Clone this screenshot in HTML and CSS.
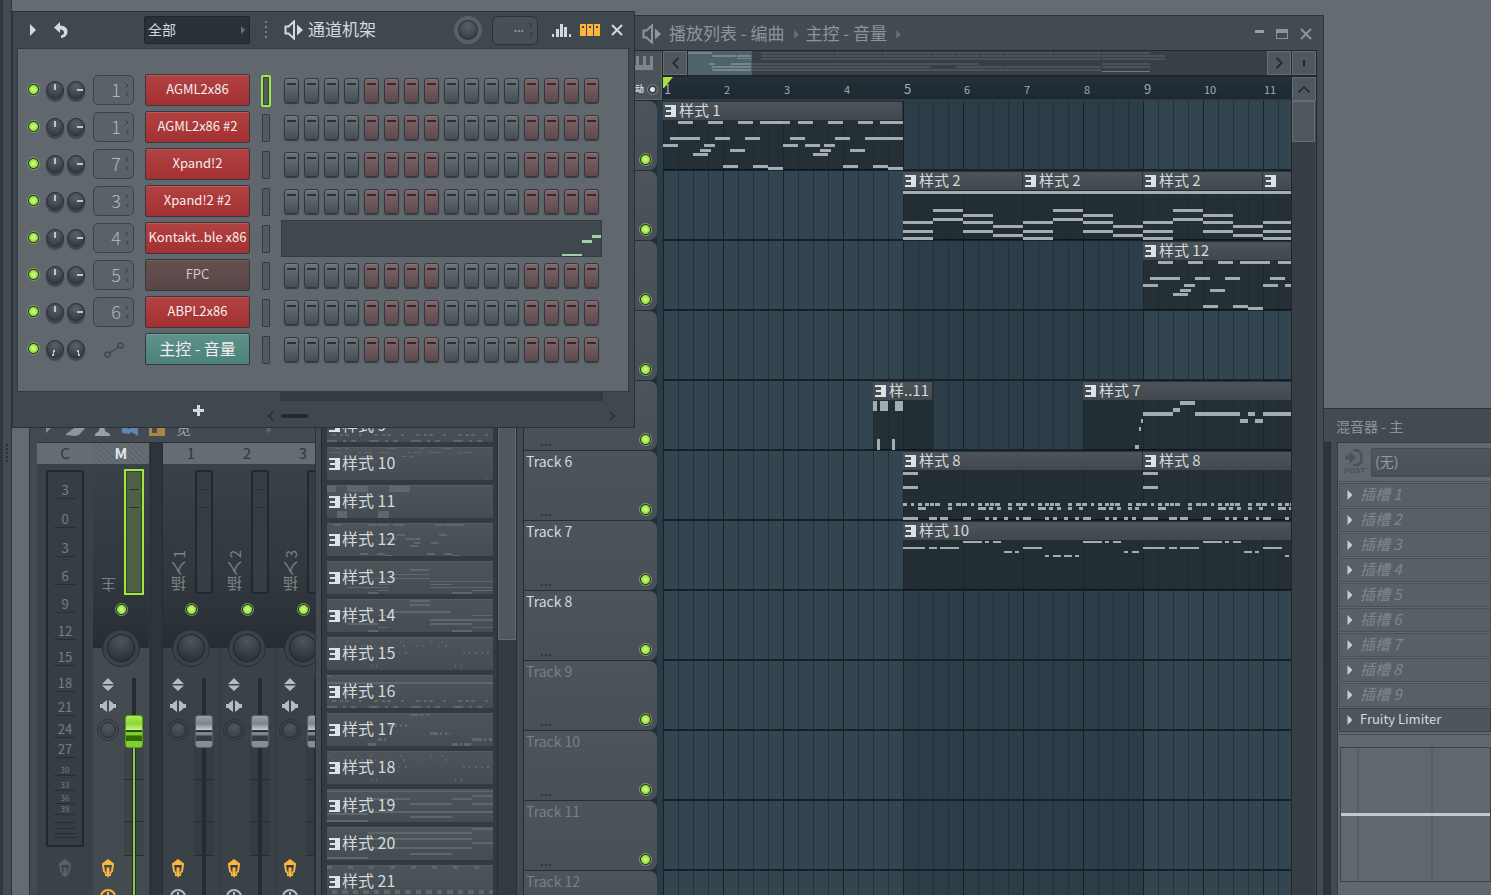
FILE: index.html
```html
<!DOCTYPE html>
<html lang="zh-CN">
<head>
<meta charset="utf-8">
<title>通道机架</title>
<link rel="stylesheet" href="styles.css">
</head>
<body>
<svg class="defs" aria-hidden="true">
  <symbol id="i-right" viewBox="0 0 6 12"><path d="M0 0L6 6L0 12Z"/></symbol>
  <symbol id="i-undo" viewBox="0 0 14 16"><path d="M6 0L0 5.500L6 11V7.500C9 7.500 10 9 10 10.500C10 12 9 13 7 13.500V16C11 15.500 13.500 13 13.500 9.500C13.500 6 10.500 3.800 6 3.600Z"/></symbol>
  <symbol id="i-speaker" viewBox="0 0 19 20"><path d="M1.500 6.500H4.500L10 1.500V18.500L4.500 13.500H1.500Z" fill="none" stroke="currentColor" stroke-width="2"/><path d="M13 4.500L19 10L13 15.500Z"/></symbol>
  <symbol id="i-bars" viewBox="0 0 19 13"><path d="M0 10h2v3H0zM4 5h3v8H4zM8 0h3v13H8zM12 3h3v10h-3zM17 10h2v3h-2z"/></symbol>
  <symbol id="i-steps" viewBox="0 0 20 12"><path fill-rule="evenodd" d="M0 0h6v12H0zM7 0h6v12H7zM14 0h6v12h-6zM2 2v2h2V2zM9 2v2h2V2zM16 2v2h2V2z"/></symbol>
  <symbol id="i-x" viewBox="0 0 12 12"><path d="M1 1L11 11M11 1L1 11" fill="none" stroke="currentColor" stroke-width="2"/></symbol>
  <symbol id="i-max" viewBox="0 0 12 10"><path fill-rule="evenodd" d="M0 0h12v10H0zM1 4v5h10V4z"/></symbol>
  <symbol id="i-plus" viewBox="0 0 11 11"><path d="M4 0h3v4h4v3H7v4H4V7H0V4h4z"/></symbol>
  <symbol id="i-lt" viewBox="0 0 6 10"><path d="M5.500 .5L1 5L5.500 9.500" fill="none" stroke="currentColor" stroke-width="1.500"/></symbol>
  <symbol id="i-gt" viewBox="0 0 6 10"><path d="M.5 .5L5 5L.5 9.500" fill="none" stroke="currentColor" stroke-width="1.500"/></symbol>
  <symbol id="i-up" viewBox="0 0 12 7"><path d="M.5 6.500L6 1L11.500 6.500" fill="none" stroke="currentColor" stroke-width="1.500"/></symbol>
  <symbol id="i-spin" viewBox="0 0 4 14"><path d="M.5 0.500L3 2.500L.5 4.500M3.500 9.500L1 11.500L3.500 13.500" fill="none" stroke="currentColor"/></symbol>
  <symbol id="i-auto" viewBox="0 0 20 16"><g fill="none" stroke="currentColor" stroke-width="1.500"><circle cx="3.500" cy="12.500" r="2.500"/><circle cx="16.500" cy="3.500" r="2.500"/><path d="M5.500 11L14.500 5"/></g></symbol>
  <symbol id="i-pat" viewBox="0 0 11 12"><path d="M0 0h11v12H0v-2h6V7H1V5h5V2H0z"/></symbol>
  <symbol id="i-piano" viewBox="0 0 26 14"><path d="M0 0h5v9h4V0h3v9h4V0h3v9h4V0h3v14H0z"/></symbol>
  <symbol id="i-updown" viewBox="0 0 12 13"><path d="M6 0L12 6H0zM0 7.500h12L6 13z"/></symbol>
  <symbol id="i-swap" viewBox="0 0 16 12"><path d="M7 0v12L3 9V8H0V4h3V3zM9 0v12l4-3V8h3V4h-3V3z"/></symbol>
  <symbol id="i-arm" viewBox="0 0 14 19"><path d="M7 0L13 4.500V6H1V4.500z"/><path d="M2 6L3 12L5 14.500M12 6L11 12L9 14.500" fill="none" stroke="currentColor" stroke-width="2"/><path d="M5.500 8.500h3V15H10v2H8l-1 2l-1-2H4v-2h1.500z"/></symbol>
  <symbol id="i-clock" viewBox="0 0 18 18"><circle cx="9" cy="9" r="7" fill="none" stroke="currentColor" stroke-width="2"/><path d="M8 4h2v6H8z"/></symbol>
  <symbol id="i-post" viewBox="0 0 22 20"><path d="M0 7h5V2l7 7.500L5 17v-5H0z"/><path d="M9 1.500h5l4 3v10l-4 3H9" fill="none" stroke="currentColor" stroke-width="3"/></symbol>
  <symbol id="i-tools" viewBox="0 0 130 16"><path d="M0 0l6 5-6 6z" fill="#8a9196"/><path d="M20 12L32 3l8 2-7 8-4 1-9-1z" fill="#8f969a"/><path d="M54 0h4l1 9 5 3v2H49v-2l4-3z" fill="#9aa1a5"/><path d="M76 3l7 4 6-5 3 3v9l-7-4-2 2-7-1z" fill="#5e86b4"/><path d="M103 0h16v14h-16z" fill="#a9854a"/><path d="M106 2h5v9h-5z" fill="#4b4c45"/></symbol>
</svg>

<aside class="dock"><i class="grip"></i></aside>

<section class="window mixer" aria-label="混音器">
  <div class="mix-left">
    <div class="mix-tools"><svg class="tools"><use href="#i-tools"/></svg><span>览</span><svg class="tools-arrow"><use href="#i-right"/></svg></div>
    <div class="strips" id="strips"></div>
  </div>
  <div class="mix-right">
    <header class="fx-title">混音器 - 主</header>
    <div class="fx-main">
      <div class="fx-split"><i class="grip"></i></div>
      <div class="fx-panel">
        <div class="fx-input">
          <button class="post" aria-label="POST"><svg><use href="#i-post"/></svg><span>POST</span></button>
          <select class="fx-select" aria-label="输入"><option>(无)</option></select>
        </div>
        <div class="slots" id="slots"></div>
        <svg class="eq"><path d="M17 0V134M91 0V134" stroke="#565e66" stroke-width="2"/><path d="M0 66.500H160" stroke="#c3c9cc" stroke-width="3"/></svg>
      </div>
    </div>
  </div>
</section>

<section class="window playlist" aria-label="播放列表">
  <header class="pl-title">
    <svg class="speaker"><use href="#i-speaker"/></svg>
    <span>播放列表 - 编曲</span><svg class="crumb"><use href="#i-right"/></svg>
    <span>主控 - 音量</span><svg class="crumb"><use href="#i-right"/></svg>
    <div class="win-buttons">
      <button aria-label="最小化"><i class="min"></i></button>
      <button aria-label="最大化"><svg class="max"><use href="#i-max"/></svg></button>
      <button aria-label="关闭"><svg class="close"><use href="#i-x"/></svg></button>
    </div>
  </header>
  <div class="pl-body">
    <div class="picker"><div class="patterns" id="patterns"></div><div class="picker-scroll"><div class="picker-thumb"></div></div></div>
    <div class="pl-split"></div>
    <div class="arranger">
      <div class="corner"><svg class="piano"><use href="#i-piano"/></svg><label class="auto"><span>动</span><input type="radio" checked></label></div>
      <div class="overview"><button class="sq" aria-label="向左"><svg class="arrow"><use href="#i-lt"/></svg></button><div class="minimap" id="minimap"></div><button class="sq" aria-label="向右"><svg class="arrow"><use href="#i-gt"/></svg></button></div>
      <button class="sq zoom" aria-label="缩放"><i></i></button>
      <div class="ruler" id="ruler"></div>
      <button class="sq up" aria-label="向上"><svg class="arrow-up"><use href="#i-up"/></svg></button>
      <div class="tracks" id="tracks"></div>
      <div class="lanes" id="lanes"></div>
      <div class="vscroll"><div class="vthumb"></div></div>
    </div>
  </div>
</section>

<section class="window rack" aria-label="通道机架">
  <header class="rack-title">
    <button class="menu" aria-label="菜单"><svg><use href="#i-right"/></svg></button>
    <button class="undo" aria-label="撤销"><svg><use href="#i-undo"/></svg></button>
    <div class="filter"><select aria-label="筛选"><option>全部</option></select><svg><use href="#i-right"/></svg></div>
    <i class="grip tall"></i>
    <svg class="speaker"><use href="#i-speaker"/></svg>
    <h1>通道机架</h1>
    <input class="swing" type="range" aria-label="摇摆">
    <div class="repeat"><span>···</span><svg><use href="#i-spin"/></svg></div>
    <button class="graph" aria-label="图形编辑器"><svg><use href="#i-bars"/></svg></button>
    <button class="stepbtn" aria-label="步进编辑器"><svg><use href="#i-steps"/></svg></button>
    <button class="rack-close" aria-label="关闭"><svg><use href="#i-x"/></svg></button>
  </header>
  <div class="channels" id="channels"></div>
  <footer class="rack-foot">
    <button class="add" aria-label="添加"><svg><use href="#i-plus"/></svg></button>
    <div class="rack-scroll"><div class="overflow"></div><div class="bar"><svg><use href="#i-lt"/></svg><i></i><svg><use href="#i-gt"/></svg></div></div>
  </footer>
</section>
<script src="app.js"></script>
</body>
</html>
```
FILE: styles.css
```css
* { box-sizing: border-box; }
html, body { height: 100%; }
body { margin: 0; overflow: hidden; position: relative; background: #646b73; color: #d3dadd;
  font: 16px/20px "Noto Sans CJK SC", sans-serif; }
button, input, select { font: inherit; color: inherit; margin: 0; padding: 0; border: 0; background: none; appearance: none; outline: 0; }
button { display: flex; align-items: center; justify-content: center; white-space: nowrap; }
svg { display: block; flex: none; fill: currentColor; overflow: hidden; }
.defs { position: absolute; width: 0; height: 0; }
.window { position: absolute; background: #434b51; border: 1px solid #2c343a; }
.grip { display: block; width: 2px; height: 18px; background: repeating-linear-gradient(#2a3238 0 2px, transparent 2px 4px); }
.grip.tall { background: repeating-linear-gradient(#7d7f80 0 2px, transparent 2px 5px); }

.dock { position: absolute; left: 0; top: 0; bottom: 0; width: 12px; background: #434b51; border-left: 3px solid #34363f; border-right: 1px solid #2c343a; padding: 444px 3px 0; }

/* LED switch and knobs */
.led { width: 13px; height: 13px; flex: none; border-radius: 50%; border: 1px solid #8b948e; background: radial-gradient(circle, #caf884 0 1px, #93e03c 4px, #1f3c05 5px); }
.knob { width: 18px; height: 18px; flex: none; border-radius: 50%; border: 1px solid #272e34; box-shadow: 0 3px 1px #3f474d; }
input[type=range]::-webkit-slider-thumb { appearance: none; width: 0; height: 0; }
.knob.pan { background: linear-gradient(#bfc6ca, #bfc6ca) 50% 2px / 2px 6px no-repeat, radial-gradient(circle at 50% 30%, #59626a, #353e45 75%); }
.knob.vol { background: linear-gradient(#bfc6ca, #bfc6ca) 9px 50% / 6px 2px no-repeat, radial-gradient(circle at 50% 30%, #59626a, #353e45 75%); }
.knob.low { background: linear-gradient(105deg, transparent 38%, #bfc6ca 39% 62%, transparent 63%) 4px 9px / 5px 6px no-repeat, radial-gradient(circle at 50% 30%, #59626a, #353e45 75%); }
.knob.high { background: linear-gradient(75deg, transparent 38%, #bfc6ca 39% 62%, transparent 63%) 8px 9px / 5px 6px no-repeat, radial-gradient(circle at 50% 30%, #59626a, #353e45 75%); }

/* Channel rack */
.rack { left: 12px; top: 11px; width: 623px; padding: 0 5px 0 4px; background: #40484f; border-color: #2a3238; }
.rack-title { display: flex; align-items: center; height: 36px; padding: 0 6px 0 13px; }
.rack-title h1 { font: 17px/24px "Noto Sans CJK SC", sans-serif; margin: 0 auto 2px 5px; }
.menu svg { width: 6px; height: 12px; }
.undo { margin-left: 18px; }
.undo svg { width: 14px; height: 16px; }
.filter { display: grid; width: 106px; height: 28px; margin: 0 15px 0 76px; background: #2a3137; border: 1px solid #20272c; border-radius: 2px; align-items: center; }
.filter select, .filter svg { grid-area: 1 / 1; }
.filter select { padding: 0 0 2px 3px; font-size: 14px; height: 26px; }
.filter svg { width: 4px; height: 8px; justify-self: end; margin-right: 4px; color: #687077; pointer-events: none; }
.speaker { width: 19px; height: 20px; }
.rack-title .speaker { margin-left: 17px; }
.swing { width: 28px; height: 28px; border-radius: 50%; border: 4px solid #586067; background: radial-gradient(circle at 50% 30%, #59626a, #353e45 75%); box-shadow: inset 0 0 0 1px #272e34; margin-right: 10px; }
.repeat { display: flex; align-items: center; justify-content: flex-end; gap: 5px; width: 46px; height: 29px; padding-right: 4px; border: 1px solid #2a3238; border-radius: 6px; background: #485057; color: #8f979b; font: 13px/20px Lato, sans-serif; margin-right: 14px; }
.repeat svg { width: 4px; height: 14px; color: #2a3238; }
.graph svg { width: 19px; height: 13px; }
.stepbtn { margin: 0 11px 0 9px; color: #fdb53c; }
.stepbtn svg { width: 20px; height: 12px; }
.rack-close svg { width: 12px; height: 12px; }
.channels { border: 1px solid #343c43; background: #60686e; padding: 23px 0; }
.channel { display: flex; align-items: center; height: 37px; padding-left: 9px; }
.channel .knob { margin: 0 0 2px 3px; }
.channel .led + .knob { margin-left: 6px; }
.channel .led { margin-bottom: 2px; }
.spin { display: flex; align-items: center; width: 41px; height: 30px; margin: 0 11px 2px 8px; padding-right: 4px; border: 1px solid #3b4349; border-radius: 5px; background: #5a6268; }
.spin input { flex: 1; min-width: 0; font-size: 18px; font-weight: 300; text-align: right; color: #b3b8b7; padding: 0 4px 2px 0; height: 26px; }
.spin svg { width: 4px; height: 14px; color: #343c43; }
.link { width: 20px; height: 16px; margin: 0 21px 0 19px; color: #3f474d; }
.name { width: 105px; height: 32px; margin-bottom: 2px; flex: none; font-size: 13px; color: #f3eeee; border: 1px solid #33393f; border-radius: 2px; background: linear-gradient(#b24242, #a43032); padding-bottom: 2px; box-shadow: inset 0 1px #c25454; }
.name.off { background: linear-gradient(#65504f, #594646); color: #cfc9c8; box-shadow: inset 0 1px #75605f; }
.name.teal { background: linear-gradient(#5e938b, #4c817b); font-size: 16px; box-shadow: inset 0 1px #75a59d; }
.sel { width: 8px; height: 28px; flex: none; margin: 0 14px 0 12px; border: 1px solid #333b42; border-radius: 1px; background: #535b61; }
.sel.on { width: 10px; height: 32px; margin: 0 13px 0 11px; border: 2px solid #9fe83e; box-shadow: inset 0 0 0 1px #3a4349; border-radius: 2px; }
.pads { display: flex; gap: 5px; }
.pad { width: 15px; height: 25px; border: 1px solid #30373d; border-radius: 3px; background: linear-gradient(#2b3237, #2b3237) 50% 4px / 9px 2px no-repeat, linear-gradient(#6c7478, #474e53); box-shadow: inset 0 1px #767e82, 0 1px 1px #333b41; }
.pad.red { background: linear-gradient(#38282b, #38282b) 50% 4px / 9px 2px no-repeat, linear-gradient(#806669, #5d494c); box-shadow: inset 0 1px #8b7275, 0 1px 1px #333b41; }
.roll { width: 321px; height: 37px; margin-left: -3px; border: 1px solid #343c43; background: #40484e; color: #a3cfa9; }
.rack-foot { display: flex; height: 35px; }
.add { margin: 1px 76px 0 176px; color: #d3dadd; }
.add svg { width: 11px; height: 11px; }
.rack-scroll { flex: 1; color: #252d33; }
.overflow { height: 9px; margin-right: 26px; background: #333b42; }
.bar { display: flex; align-items: center; height: 30px; margin: 0 14px 0 -12px; }
.bar i { width: 27px; height: 4px; margin: 0 auto 0 7px; background: #22292f; border-radius: 2px; }
.bar svg { width: 6px; height: 10px; }

/* Mixer */
.mixer { left: 29px; top: 408px; right: -1px; bottom: -1px; display: flex; justify-content: space-between; }
.mix-left { width: 286px; padding: 13px 0 0 7px; overflow: hidden; }
.mix-tools { display: flex; align-items: flex-start; height: 19px; padding-left: 9px; font-size: 15px; line-height: 12px; color: #9aa1a5; }
.tools { width: 130px; height: 16px; }
.mix-tools span { height: 12px; }
.tools-arrow { width: 6px; height: 9px; margin: 3px 0 0 75px; color: #5d656b; }
.strips { display: flex; width: 294px; margin-top: 1px; border-top: 1px solid #2a3238; background: #3a4248; }
.strip { width: 56px; flex: none; box-shadow: 1px 0 #333b41; }
.strip.scale { box-shadow: none; }
.strip.master { background: #434b51; margin-right: 1px; }
.strip-gap { width: 13px; flex: none; background: #2d353b; border: solid #262d33; border-width: 0 1px; padding: 200px 4px 0; }
.strip-no { height: 21px; line-height: 20px; text-align: center; background: #646d73; color: #31383d; font-size: 15px; }
.master .strip-no { background: repeating-linear-gradient(45deg, #666e74 0 2px, #5f676d 2px 4px); color: #e0e6e9; font-weight: bold; }
.upper { display: flex; gap: 4px; height: 128px; padding: 6px 6px 0 5px; background: linear-gradient(#3a4248, #2f363c); }
.upper b { flex: 1; align-self: flex-end; font: 15px/22px "Noto Sans CJK SC", sans-serif; color: #7b8388; writing-mode: vertical-rl; transform: rotate(180deg); text-align: left; }
.meter { width: 18px; height: 124px; border: 2px solid #22292e; border-radius: 2px; background: linear-gradient(#2a3137, #2a3137) 50% 17px / 10px 1px no-repeat, linear-gradient(#2a3137, #2a3137) 50% 35px / 10px 1px no-repeat, #363e44; }
.master .meter { background-color: #4d6043; border-color: #36432f; outline: 2px solid #9fe83e; outline-offset: -1px; border-radius: 0; }
.mid { display: flex; flex-direction: column; align-items: center; gap: 14px; padding-top: 11px; height: 72px; background: linear-gradient(#2f363c, #272e33) 0 0 / 100% 56px no-repeat; }
.big { width: 36px; height: 36px; flex: none; border-radius: 50%; border: 4px solid #39424a; outline: 1px solid #262d33; background: radial-gradient(circle at 50% 25%, #4d555c, #2e363c 70%); box-shadow: inset 0 0 0 1px #1f262b; }
.lower { display: grid; grid-template-columns: 30px 1fr; height: 240px; padding-top: 14px; }
.icons { display: flex; flex-direction: column; align-items: center; color: #b5bcc1; }
.icons .updown { width: 12px; height: 13px; }
.icons .swap { width: 16px; height: 12px; margin-top: 9px; }
.small { width: 16px; height: 16px; border-radius: 50%; margin: 10px 0 0; border: 1px solid #262d33; outline: 1px solid #2d353b; outline-offset: 2px; background: radial-gradient(circle at 50% 30%, #505960, #353e45); }
.icons .arm { width: 14px; height: 19px; margin-top: 121px; color: #fdb53c; }
.icons .clock { width: 18px; height: 18px; margin-top: 10px; }
.master .icons .clock { color: #fdb53c; }
.fader { margin: 0 4px 0 0; display: flex; justify-content: center; background: linear-gradient(#252c31, #252c31) 50% 0 / 4px 100% no-repeat, linear-gradient(#262d33, #262d33) 50% 48px / 26px 1px no-repeat, linear-gradient(#262d33, #262d33) 50% 101px / 20px 1px no-repeat, linear-gradient(#262d33, #262d33) 50% 143px / 20px 1px no-repeat, linear-gradient(#262d33, #262d33) 50% 177px / 20px 1px no-repeat, linear-gradient(#343c41, #343c41) 50% 67px / 20px 110px no-repeat; }
.master .fader { background: linear-gradient(#8ccc3c, #8ccc3c) 50% 50px / 2px 100% no-repeat, linear-gradient(#252c31, #252c31) 50% 0 / 4px 100% no-repeat, linear-gradient(#262d33, #262d33) 50% 48px / 26px 1px no-repeat, linear-gradient(#262d33, #262d33) 50% 101px / 20px 1px no-repeat, linear-gradient(#262d33, #262d33) 50% 143px / 20px 1px no-repeat, linear-gradient(#262d33, #262d33) 50% 177px / 20px 1px no-repeat, linear-gradient(#3c444a, #3c444a) 50% 67px / 20px 110px no-repeat; }
.cap { width: 18px; height: 33px; margin-top: 37px; border: 1px solid #596066; border-radius: 3px; background: linear-gradient(#9aa1a6 0, #7d848a 25%, #c8cdd1 45%, #24292d 47% 50%, #80878d 52% 60%, #363d42 65% 80%, #868d93 82%); }
.master .cap { border-color: #5a9b1e; background: linear-gradient(#a8ee52 0, #8bd43b 25%, #c3fa80 45%, #24400d 47% 50%, #7fcf2b 52% 60%, #2f6c08 65% 80%, #7fce2d 82%); }
.scale-box { display: block; width: 38px; height: 377px; margin: 6px 0 0 9px; border: 2px solid #22292e; border-radius: 2px; background: #363e44; font-size: 13px; color: #767e83; text-anchor: middle; }
.scale-box .tiny { font-size: 8px; }
.scale-arm { width: 14px; height: 19px; margin: 12px auto 0 21px; color: #596066; }

/* Effects panel */
.mix-right { display: flex; flex-direction: column; width: 167px; }
.fx-title { height: 33px; padding: 8px 0 0 12px; font-size: 14px; line-height: 18px; color: #8d9499; }
.fx-main { display: flex; flex: 1; }
.fx-split { width: 7px; background: #2d353b; border-right: 1px solid #262d33; padding: 200px 2px 0; border-top: 1px solid #262d33; }
.fx-panel { flex: 1; margin-left: 6px; border: solid #353d43; border-width: 1px 0 0 1px; background: #60686e; overflow: hidden; }
.fx-input { display: flex; align-items: center; height: 39px; padding-left: 5px; border-bottom: 1px solid #4a5258; }
.post { flex-direction: column; color: #4b5359; width: 23px; }
.post svg { width: 20px; height: 18px; }
.post span { font: bold 7px/8px "DejaVu Sans", sans-serif; }
.fx-select { flex: 1; height: 29px; margin-left: 5px; padding: 0 0 2px 3px; background: linear-gradient(#50585e, #485056); border: 1px solid #444c52; border-radius: 2px; color: #959ca0; font-size: 14px; }
.slots { padding: 1px 0 1px 1px; border-bottom: 1px solid #474f55; }
.slot { display: flex; width: 100%; justify-content: flex-start; gap: 7px; height: 24px; margin-bottom: 1px; padding: 0 0 2px 7px; border: 1px solid #495157; background: #586065; color: #7f878b; font-style: italic; font-size: 15px; }
.slot svg { width: 6px; height: 10px; margin-top: 2px; color: #c8ced1; }
.slot.used { background: #4e565d; border-color: #3a4248; color: #d3dadd; font-style: normal; font-size: 13px; }
.eq { width: calc(100% - 2px); height: 135px; margin: 12px 0 0 2px; border: 1px solid #3c444a; }

/* Playlist */
.playlist { left: 315px; top: 15px; right: 167px; bottom: -1px; display: flex; flex-direction: column; padding: 0 6px 0 5px; }
.pl-title { display: flex; align-items: center; height: 34px; padding: 2px 5px 0 321px; font-size: 17px; color: #8d959a; }
.pl-title span { margin: 0 0 2px 8px; }
.crumb { width: 5px; height: 9px; margin-left: 9px; color: #687076; }
.crumb + span { margin-left: 7px; }
.win-buttons { display: flex; gap: 12px; margin-left: auto; align-items: center; }
.min { width: 9px; height: 3px; background: #9aa1a5; margin-bottom: 6px; }
.max { width: 12px; height: 10px; }
.close { width: 12px; height: 12px; }
.pl-body { display: flex; flex: 1; min-height: 0; border: solid #20282e; border-width: 1px 1px 0 1px; overflow: hidden; }
.picker { display: flex; width: 194px; background: #323b42; }
.patterns { flex: 1; padding: 358px 4px 0 5px; }
.pattern { display: grid; width: 166px; height: 33px; margin-bottom: 5px; background: linear-gradient(#4d555b, #454d53); border-radius: 1px; box-shadow: inset 0 1px #555d63; }
.pattern > * { grid-area: 1 / 1; }
.thumb { width: 166px; height: 33px; fill: #5f676d; }
.label { display: flex; align-items: center; gap: 2px; padding: 0 0 3px 2px; font-size: 16px; }
.label svg { width: 11px; height: 12px; margin-top: 4px; color: #dde4e7; }
.picker-scroll { width: 19px; background: #333a40; border-left: 1px solid #252d33; }
.picker-thumb { height: 589px; background: #50585e; border: 1px solid #646c72; }
.pl-split { width: 8px; flex: none; background: #434b51; border: solid #252d33; border-width: 0 1px; }
.arranger { flex: 1; min-width: 0; display: grid; grid-template: 26px 24px 1fr / 139px 1fr 25px; background: #20282e; }
.corner { grid-row: 1 / 3; display: flex; flex-direction: column; align-items: flex-end; margin: 0 1px 1px 0; border: 1px solid #5d656b; border-width: 0 1px 1px 0; background: #4b5359; }
.piano { width: 26px; height: 14px; margin: 5px 8px 0 0; color: #7f878b; }
.auto { display: flex; align-items: center; gap: 3px; margin: 13px 3px 0 0; font-size: 9px; line-height: 12px; font-weight: bold; height: 12px; }
.auto input { width: 11px; height: 11px; border: 1px solid #7d8589; border-radius: 50%; background: radial-gradient(#dfe5e8 0 2px, #3a4248 3px); }
.overview { display: flex; }
.sq { width: 24px; height: 24px; flex: none; background: #50585e; border: 1px solid #666e74; color: #1e262c; }
.arrow { width: 7px; height: 12px; }
.arrow-up { width: 12px; height: 7px; }
.zoom, .up { margin-left: 1px; }
.zoom i { width: 2px; height: 6px; background: #1e262c; }
.minimap { flex: 1; min-width: 0; margin-left: 1px; height: 24px; overflow: hidden; background: #383f45; }
.minimap svg { width: 579px; height: 24px; fill: #4b5359; }
.ruler { position: relative; height: 24px; background: linear-gradient(#24303a, #1d282f); border-bottom: 2px solid #303b42; overflow: hidden; color: #a0aab0; }
.ruler span { position: absolute; top: 3px; font-size: 11px; line-height: 18px; }
.ruler .major { font-size: 13px; }
.marker { position: absolute; left: 0; top: 0; width: 10px; height: 12px; fill: #a5e33c; }
.tracks { background: #20303a; border-right: 6px solid #2b3c46; overflow: hidden; }
.track { display: grid; grid-template: 22px 1fr / 1fr 18px; height: 69px; margin-bottom: 1px; padding-left: 2px; background: linear-gradient(#4d555c, #465056); border-radius: 0 8px 8px 0; font-size: 14px; line-height: 20px; }
.track.dim { color: #788084; }
.track strong { font-weight: normal; grid-column: 1 / 3; }
.track span { padding: 30px 0 0 14px; color: #2a3238; line-height: 14px; }
.track .led { margin-top: 30px; }
.lanes { overflow: hidden; background: repeating-linear-gradient(transparent 0 68px, #13222b 68px 70px), repeating-linear-gradient(90deg, #14232b 0 1px, transparent 1px 60px), repeating-linear-gradient(90deg, #22323c 0 1px, transparent 1px 15px), repeating-linear-gradient(90deg, #334650 0 240px, #2d3e49 240px 480px); }
.lane { position: relative; height: 70px; }
.clip { position: absolute; top: 0; height: 69px; background: rgba(32, 40, 46, .75); border-bottom: 1px solid #0c1519; }
.clip-head { display: flex; align-items: center; gap: 3px; height: 19px; padding-left: 2px; white-space: nowrap; background: linear-gradient(#4d5459, #41494e); border: solid #29323a; border-width: 1px 1px 0 0; line-height: 18px; }
.clip-head svg { width: 11px; height: 12px; color: #dde4e7; }
.clip-head span { font-size: 15px; margin-bottom: 3px; }
.notes { position: absolute; left: 0; top: 0; width: 100%; height: 69px; fill: #a3adb1; }
.vscroll { margin-left: 1px; border-right: 1px solid #434b51; background: #363e43; }
.vthumb { height: 41px; background: #50585e; border: 1px solid #666e74; }
```
FILE: app.js
```js
const $ = id => document.getElementById(id);
const icon = (name, cls = '') => `<svg class="${cls}"><use href="#i-${name}"/></svg>`;
const led = label => `<button class="led" aria-label="${label}"></button>`;

// Notes are listed as rows: [y, height, [x, width, x, width, ...]]
const rects = rows => rows.map(([y, h, xs]) => {
  let out = '';
  for (let i = 0; i < xs.length; i += 2) out += `<rect x="${xs[i]}" y="${y}" width="${xs[i + 1]}" height="${h}"/>`;
  return out;
}).join('');
const loop = (xs, step, times) => Array.from({ length: times }, (_, n) => xs.map((v, i) => i % 2 ? v : v + n * step)).flat();

// Channel rack
const channels = [
  ['1', 'AGML2x86', ''], ['1', 'AGML2x86 #2', ''], ['7', 'Xpand!2', ''], ['3', 'Xpand!2 #2', ''],
  ['4', 'Kontakt..ble x86', ''], ['5', 'FPC', 'off'], ['6', 'ABPL2x86', ''], ['', '主控 - 音量', 'teal']
];
const pads = Array.from({ length: 16 }, (_, i) => `<button class="pad${i >> 2 & 1 ? ' red' : ''}" aria-label="步 ${i + 1}"></button>`).join('');
$('channels').innerHTML = channels.map(([no, name, cls], i) => `<div class="channel">${led(name)}
  <input type="range" class="knob ${no ? 'pan' : 'low'}" aria-label="声像"><input type="range" class="knob ${no ? 'vol' : 'high'}" aria-label="音量">
  ${no ? `<div class="spin"><input value="${no}" aria-label="混音器轨道">${icon('spin')}</div>` : icon('auto', 'link')}
  <button class="name ${cls}">${name}</button><button class="sel${i ? '' : ' on'}" aria-label="选择"></button>
  ${i === 4 ? `<svg class="roll">${rects([[33, 3, [280, 20]], [19, 3, [300, 10]], [14, 3, [310, 9]]])}</svg>` : `<div class="pads">${pads}</div>`}
</div>`).join('');

// Mixer strips
const marks = [[3, 26], [0, 55], [3, 84], [6, 112], [9, 140], [12, 167], [15, 193], [18, 219], [21, 243], [24, 265], [27, 285], [30, 303], [33, 318], [36, 331], [39, 342]];
const scale = marks.map(([t, y]) => `<text x="17" y="${t < 30 ? y - 3 : y - 2}"${t < 30 ? '' : ' class="tiny"'}>${t}</text>`).join('') +
  [...marks.map(m => m[1]), 350, 356, 361, 365].map(y => `<rect x="6" y="${y}" width="22" height="1" fill="#262d33"/>`).join('');
const strip = (no, name, cls) => `<div class="strip ${cls}"><div class="strip-no">${no}</div>
  <div class="upper"><b>${name}</b><div class="meter"></div></div>
  <div class="mid">${led(name)}<input type="range" class="big" aria-label="声像"></div>
  <div class="lower"><div class="icons">${icon('updown', 'updown')}${icon('swap', 'swap')}<input type="range" class="small" aria-label="立体声">${icon('arm', 'arm')}${icon('clock', 'clock')}</div>
  <div class="fader"><button class="cap" aria-label="音量"></button></div></div></div>`;
$('strips').innerHTML = `<div class="strip scale"><div class="strip-no">C</div><svg class="scale-box">${scale}</svg>${icon('arm', 'scale-arm')}</div>` +
  strip('M', '主', 'master') + '<div class="strip-gap"><i class="grip"></i></div>' +
  [1, 2, 3].map(n => strip(n, '插入 ' + n, '')).join('');

// Effect slots
$('slots').innerHTML = [1, 2, 3, 4, 5, 6, 7, 8, 9].map(n => `<button class="slot">${icon('right')}插槽 ${n}</button>`).join('') +
  `<button class="slot used">${icon('right')}Fruity Limiter</button>`;

// Pattern picker
const ticks = [[4, 2, loop([2, 1, 20, 1, 31, 1], 42, 3)], [8, 2, loop([6, 1, 12, 1, 28, 1, 34, 2], 42, 3)], [15, 2, [54, 1, 60, 1, 66, 2, 72, 1, 78, 2, 136, 2, 142, 1, 148, 2, 154, 2, 160, 2]], [28, 3, [44, 1, 49, 1, 128, 1, 134, 1]]];
const beat = [[25, 2, loop([5, 4, 13, 3, 18, 4, 32, 3], 42, 4)], [31, 2, loop([0, 10, 16, 3, 24, 5], 42, 4)]];
const thumbs = {
  9: beat,
  10: [[1, 1, [8, 6, 18, 4, 60, 8, 92, 4, 116, 8]], [5, 1, loop([2, 12, 30, 4, 37, 8], 50, 3)], [9, 1, [34, 6, 74, 6, 82, 4]], [31, 1, [158, 2]]],
  11: [[0, 7, [0, 9, 20, 21, 62, 21]], [26, 7, [10, 10, 51, 11]]],
  12: [[1, 2, [7, 8, 41, 8, 50, 12, 66, 11, 108, 8, 117, 20]], [11, 2, [70, 8, 112, 8]], [15, 2, [58, 12, 79, 15]], [19, 2, [16, 12, 87, 6, 104, 8]], [22, 2, [83, 8]], [30, 2, [33, 8, 50, 8, 100, 8, 117, 8]], [32, 1, [58, 8, 125, 8]]],
  13: [[8, 2, [83, 20]], [13, 1, [62, 41]], [17, 1, [41, 62]], [20, 1, [103, 42, 145, 21]], [23, 1, [51, 11, 103, 22]], [26, 1, [20, 42, 103, 63]], [29, 1, [51, 11, 145, 21]], [31, 2, [41, 10, 125, 20]]],
  14: [[1, 2, [83, 20]], [5, 2, [83, 20]], [12, 2, [0, 20, 62, 62]], [16, 1, [51, 11, 145, 21]], [20, 2, [103, 63]], [24, 2, [20, 31, 103, 42]], [28, 1, [51, 11, 145, 21]], [31, 2, [41, 10, 125, 20]]],
  15: ticks,
  16: [[0, 2, [0, 4]], [7, 2, [0, 166]], ...beat],
  17: [[1, 2, [83, 8, 93, 4, 99, 3]], [11, 3, [62, 4, 68, 2, 73, 2, 78, 2]], [19, 3, [103, 8, 113, 2, 118, 2, 122, 1]], [25, 3, [51, 4, 57, 2, 145, 10, 157, 2, 162, 3]], [30, 3, [41, 8, 125, 6, 133, 2, 137, 7]]],
  18: ticks,
  19: [[2, 1, [0, 166]], [6, 2, [145, 21]], [9, 2, [41, 42, 125, 20]], [14, 2, [83, 42, 145, 21]], [22, 2, [41, 125]], [24, 2, [0, 41]], [27, 2, [83, 42]], [31, 2, [0, 41]]],
  20: [[1, 2, [145, 21]], [5, 2, [41, 104]], [11, 2, [41, 104]], [15, 2, [145, 21]], [20, 2, [41, 104]], [26, 2, [83, 42]], [30, 2, [0, 41]]],
  21: [[1, 3, loop([0, 5], 21, 8)], [25, 4, loop([5, 5, 15, 6], 21, 8)]]
};
$('patterns').innerHTML = Object.keys(thumbs).map(n => `<div class="pattern"><svg class="thumb">${rects(thumbs[n])}</svg><div class="label">${icon('pat')}<span>样式 ${n}</span></div></div>`).join('');

// Playlist overview, ruler and track headers
const full = [73, 73, 147, 47, 195, 48, 244, 24, 269, 22, 292, 24, 317, 48, 366, 47];
$('minimap').innerHTML = `<svg><rect width="64" height="24" fill="#50626a"/><g fill="#77868b">${rects([[1, 2, [0, 24]], [4, 2, [24, 24, 49, 14]], [7, 1, [49, 14]], [12, 2, [21, 6, 43, 20]], [15, 2, [24, 39]], [18, 2, [24, 39]]])}</g>
  ${rects([[1, 2, [...full, 414, 23, 438, 24]], [4, 2, [...full, 414, 63]], [7, 2, [73, 340, 414, 63]], [12, 2, [64, 226, 414, 23, 438, 24]], [15, 2, [64, 179, 268, 48, 317, 96, 414, 48]], [18, 2, [64, 349]]])}<rect x="414" y="20" width="48" height="1" fill="#5c8480"/></svg>`;
$('ruler').innerHTML = '<svg class="marker"><path d="M0 0H10L1 11H0Z"/></svg>' + Array.from({ length: 11 }, (_, i) => `<span class="${i % 4 ? '' : 'major'}" style="left:${i * 60 + 1}px">${i + 1}</span>`).join('');
$('tracks').innerHTML = Array.from({ length: 12 }, (_, i) => `<div class="track${i > 7 ? ' dim' : ''}"><strong>${i > 4 ? 'Track ' + (i + 1) : ''}</strong><span>${i > 3 && i < 11 ? '...' : ''}</span>${led('轨道 ' + (i + 1))}</div>`).join('');

// Clips
const arp = [
  [20, 3, [15, 15, 45, 15, 75, 15, 97, 15, 112, 15, 135, 15, 165, 15, 195, 15, 217, 15, 232, 8]],
  [36, 3, [7, 15, 22, 15, 52, 15, 82, 15, 127, 15, 172, 15, 202, 15, 214, 15, 229, 11]],
  [43, 3, [0, 15, 41, 11, 120, 15, 142, 15, 161, 11]],
  [48, 3, [37, 11, 67, 15, 157, 11, 187, 15]], [52, 3, [30, 15, 150, 15]],
  [64, 3, [60, 15, 90, 15, 180, 15, 210, 15]], [66, 3, [105, 15, 225, 15]]
];
const chords = [[20, 3, [0, 120]], [38, 3, [30, 30]], [43, 3, [60, 30]], [47, 3, [30, 30]], [50, 3, [0, 30, 60, 30]], [54, 3, [90, 30]], [59, 3, [0, 30, 60, 30]], [63, 3, [90, 30]], [66, 3, [0, 30]]];
const stabs = [[20, 10, [0, 4, 7, 8, 22, 8]], [58, 11, [4, 3, 19, 3]]];
const lead = [[20, 4, [97, 15]], [27, 4, [90, 7]], [31, 4, [60, 30, 112, 45, 165, 7, 180, 28]], [38, 4, [157, 8, 172, 8, 58, 2]], [46, 4, [56, 2]], [64, 4, [52, 4]]];
const drums = [
  [21, 3, [0, 15]], [35, 3, [0, 15]],
  [52, 3, loop([0, 4, 8, 3, 15, 4, 22, 4, 27, 4, 32, 5, 45, 4, 53, 5, 59, 5], 60, 4)],
  [56, 3, [15, 8, ...loop([45, 4, 75, 8, 86, 4, 94, 4], 60, 3), 116, 4, 176, 4, 225, 4, 232, 4]],
  [66, 3, [0, 15, 26, 8, 37, 8, 60, 8, 82, 4, 90, 4, 101, 4, 113, 3, 120, 8, 142, 4, 150, 4, 161, 4, 172, 4, 180, 8, 202, 4, 210, 4, 221, 4, 229, 4]]
];
const bass = [
  [20, 2, [60, 19, 82, 4, 90, 8, 180, 19, 202, 4, 210, 8, 300, 19, 322, 4, 330, 8]],
  [26, 2, [0, 22, 26, 8, 37, 19, 120, 19, 240, 22, 266, 8, 277, 19, 360, 19]],
  [30, 2, [101, 8, 112, 4, 221, 4, 229, 7, 341, 8, 352, 4]],
  [34, 2, [142, 4, 150, 8, 161, 8, 172, 4, 382, 4]]
];
const lanes = [
  [[0, 240, '样式 1', arp]],
  [[240, 120, '样式 2', chords], [360, 120, '样式 2', chords], [480, 120, '样式 2', chords], [600, 120, '', chords]],
  [[480, 240, '样式 12', arp]], [],
  [[210, 60, '样..11', stabs], [420, 300, '样式 7', lead]],
  [[240, 240, '样式 8', drums], [480, 240, '样式 8', drums]],
  [[240, 480, '样式 10', bass]], [], [], [], [], []
];
$('lanes').innerHTML = lanes.map(clips => `<div class="lane">${clips.map(([x, w, name, notes]) => `<div class="clip" style="left:${x}px;width:${w}px"><div class="clip-head">${icon('pat')}<span>${name}</span></div><svg class="notes">${rects(notes)}</svg></div>`).join('')}</div>`).join('');
```
